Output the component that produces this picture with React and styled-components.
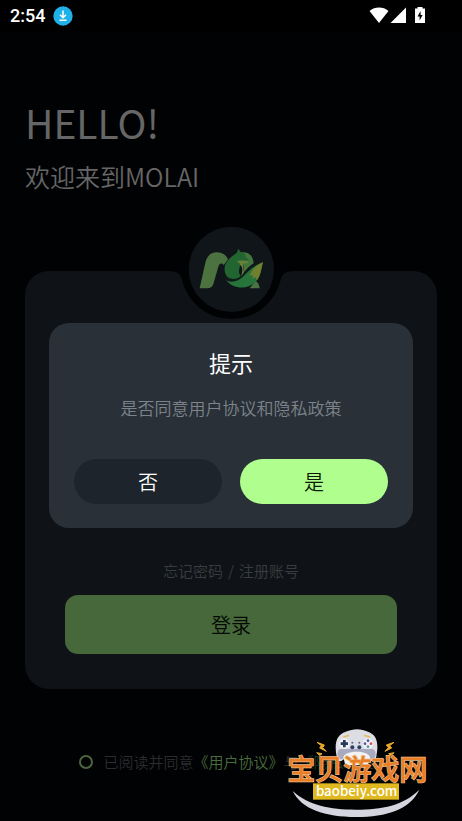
import React from "react"
import styled, { createGlobalStyle } from "styled-components"

const colors = {
  bg: "#010204",
  card: "#0f1317",
  dialog: "#293037",
  lime: "#b0ff8e",
  green: "#46683a",
  heading: "#666666",
}

const GlobalStyle = createGlobalStyle`
  * {
    box-sizing: border-box;
  }
  body {
    margin: 0;
    background: ${colors.bg};
    font-family: "Noto Sans CJK SC", sans-serif;
    font-weight: 350;
  }
  button {
    font-family: inherit;
    font-weight: inherit;
    border: 0;
    padding: 0;
    cursor: pointer;
  }
`

const Screen = styled.div`
  position: relative;
  display: flex;
  flex-direction: column;
  min-height: 100vh;
  overflow: hidden;
`

const StatusBar = styled.header`
  display: flex;
  align-items: center;
  gap: 8px;
  height: 32px;
  padding: 0 35px 0 10px;
  background: #000;
  color: #fff;
`

const Clock = styled.time`
  font: 500 18px/20px Roboto, sans-serif;
`

const StatusIcons = styled.div`
  display: flex;
  align-items: center;
  margin-left: auto;
`

const Main = styled.main`
  display: flex;
  flex-direction: column;
  padding: 62px 25px 48px;
`

const Hello = styled.h1`
  margin: 0;
  font-size: 39px;
  font-weight: 400;
  line-height: 56px;
  color: ${colors.heading};
`

const Welcome = styled.p`
  margin: 10px 0 0;
  font-size: 25px;
  line-height: 32px;
  color: ${colors.heading};
`

const Card = styled.section`
  position: relative;
  display: flex;
  flex-direction: column;
  align-items: center;
  margin-top: 79px;
  padding: 288px 40px 35px;
  border-radius: 24px;
  background: ${colors.card};
`

const Badge = styled.svg`
  position: absolute;
  top: -61px;
`

const CardLinks = styled.nav`
  display: flex;
  gap: 5px;
  font-size: 15px;
  line-height: 24px;
  color: #3a3d40;
`

const PlainLink = styled.a`
  color: ${(props) => props.$color || "inherit"};
  text-decoration: none;
`

const LoginButton = styled.button`
  width: 100%;
  height: 59px;
  margin-top: 12px;
  border-radius: 13px;
  background: ${colors.green};
  color: #040a03;
  font-size: 20px;
`

const Agreement = styled.div`
  display: flex;
  align-items: center;
  justify-content: center;
  gap: 10px;
  margin-top: 61px;
  padding-left: 6px;
  font-size: 15px;
  line-height: 24px;
  color: #2b2c2d;
  white-space: nowrap;
`

const AgreeRadio = styled.input`
  appearance: none;
  width: 14px;
  height: 14px;
  margin: 0;
  border: 2px solid #4a6540;
  border-radius: 50%;
`

const Overlay = styled.div`
  position: absolute;
  inset: 28px 0 0;
  display: flex;
  align-items: center;
  justify-content: center;
  padding: 0 49px;
`

const Dialog = styled.div`
  display: flex;
  flex-direction: column;
  align-items: center;
  width: 100%;
  padding: 23px 25px 24px;
  border-radius: 20px;
  background: ${colors.dialog};
`

const DialogTitle = styled.h2`
  margin: 0;
  font-size: 22px;
  font-weight: 400;
  line-height: 32px;
  color: #fff;
`

const DialogText = styled.p`
  margin: 18px 0 0;
  font-size: 17px;
  line-height: 24px;
  color: #7c838b;
`

const DialogActions = styled.div`
  display: grid;
  grid-template-columns: 1fr 1fr;
  gap: 18px;
  width: 100%;
  margin-top: 39px;
`

const PillButton = styled.button`
  height: 45px;
  border-radius: 23px;
  background: ${(props) => (props.$primary ? colors.lime : "#1d242c")};
  color: ${(props) => (props.$primary ? "#0b1a08" : "#fff")};
  font-size: 20px;
`

const Watermark = styled.svg`
  position: absolute;
  right: 27px;
  bottom: 0;
  pointer-events: none;
`

const DownloadIcon = () => (
  <svg width="20" height="20" viewBox="0 0 20 20" aria-hidden="true">
    <circle cx="10" cy="10" r="9.7" fill="#1fb1ea" />
    <path
      d="M10 4.5v7M7 8.8l3 3 3-3M6.5 14.2h7"
      fill="none"
      stroke="#fff"
      strokeWidth="1.5"
    />
  </svg>
)

const SystemIcons = () => (
  <svg width="58" height="20" viewBox="0 0 58 20" fill="#fff" aria-hidden="true">
    <path d="M0.5 5C5.8 0.4 14.2 0.4 19.5 5L10 17Z" />
    <path d="M37 1.5V17H21.5Z" />
    <path d="M48.5 1h5v1.5H56V17H46V2.5h2.5z" />
    <path d="M51.6 5L48.5 10.6H50.6V14.6L53.6 9H51.6Z" fill="#000" />
  </svg>
)

// fox logo in its round badge, with the notch cut out of the card edge
const LogoBadge = () => (
  <Badge width="125" height="115" viewBox="-4 0 375 345" role="img" aria-label="MOLAI">
    <path
      d="M0 170V184C20 184 30 192 35 210A152 152 0 0 0 331 210C336 192 346 184 366 184V170Z"
      fill={colors.bg}
    />
    <circle cx="183" cy="178" r="128" fill="#10151a" />
    <path
      d="M88 235L105 158C110 137 122 127 139 127C155 127 168 135 173 148L160 166C157 158 147 159 144 170L129 222C126 231 120 235 111 235Z"
      fill="#4c7240"
    />
    <path d="M214 127C234 124 248 136 250 160C240 166 230 176 222 186L218 160Z" fill="#45753d" />
    <path d="M255 213C263 216 267 225 268 235H238Z" fill="#4c7343" />
    <path
      d="M199 129L204 116L211 126L223 130L227 141L236 151C233 158 226 160 220 159C213 166 216 180 218 194C206 207 186 211 172 202C162 192 160 174 166 161C173 147 186 138 199 129Z"
      fill="#236531"
    />
    <path
      d="M198 154C208 150 224 152 235 153C232 160 226 161 220 160C216 166 221 178 221 187L214 197C216 184 216 173 210 166C210 160 204 156 198 154Z"
      fill="#66803a"
    />
    <path d="M210 166C218 172 218 186 211 198C203 190 206 176 210 166Z" fill="#10151a" />
    <path
      d="M167 210C182 220 202 214 216 202C234 184 248 167 278 157C272 176 273 193 260 211C238 239 191 241 167 210Z"
      fill="#27743a"
    />
    <path
      d="M278 157C272 176 273 193 260 211L255 201L247 206L247 194L237 198L245 183C252 171 262 164 278 157Z"
      fill="#70802f"
    />
    <path
      d="M162 203C182 218 202 209 214 198C230 182 243 168 264 160"
      fill="none"
      stroke="#10201a"
      strokeWidth="3"
    />
  </Badge>
)

const SiteMark = () => (
  <Watermark width="155" height="101" viewBox="0 0 465 303">
    <path
      d="M38 210C85 253 150 266 228 266C306 266 371 253 418 206C391 264 321 288 228 288C135 288 64 264 38 210Z"
      fill="#d5d5e0"
    />
    <path
      d="M171 111C161 65 170 41 197 32C220 22 243 22 264 32C290 41 298 65 288 111C280 130 267 118 260 105C248 88 210 88 198 105C191 118 178 130 171 111Z"
      fill="#dddde4"
    />
    <path
      d="M173 105C170 79 184 83 205 84H253C276 82 290 82 286 106C280 121 267 112 258 101C246 89 212 89 201 101C191 115 177 121 173 105Z"
      fill="#a8aac0"
    />
    <path d="M190 108C196 87 263 87 270 108L264 133H196Z" fill="#f3f3f5" />
    <path d="M190 48L207 43M252 43L270 48" stroke="#e2b94a" strokeWidth="4" />
    <circle cx="193" cy="68" r="16" fill="#f0f0f5" />
    <path d="M193 57V79M182 68H204" stroke="#26385b" strokeWidth="8" />
    <circle cx="264" cy="68" r="16" fill="#f0f0f5" />
    <circle cx="264" cy="59" r="4" fill="#465b9c" />
    <circle cx="264" cy="77" r="4" fill="#4c9aac" />
    <circle cx="255" cy="68" r="4" fill="#5b558e" />
    <circle cx="273" cy="68" r="4" fill="#d64760" />
    <circle cx="217" cy="79" r="6" fill="#2c4263" />
    <circle cx="238" cy="79" r="6" fill="#2c4263" />
    <circle cx="217" cy="65" r="3" fill="#5a678d" />
    <circle cx="238" cy="65" r="3" fill="#5a678d" />
    <path
      d="M111 64L133 72L128 80L139 91L119 81L124 74ZM342 64L319 72L325 80L315 91L335 81L329 74ZM110 95L126 98L119 104ZM342 95L326 98L333 104Z"
      fill="#eaa925"
      stroke="#eaa925"
      strokeWidth="3"
    />
    <rect x="99" y="187" width="258" height="49" fill="#dfb91f" />
    <text
      x="22"
      y="178"
      fontSize="84"
      fontWeight="500"
      fill="#e87f28"
      stroke="#f0bd86"
      strokeWidth="4"
      paintOrder="stroke"
    >
      宝贝游戏网
    </text>
    <text
      x="230"
      y="225"
      textAnchor="middle"
      fontSize="40"
      fontWeight="500"
      fill="#fff"
    >
      baobeiy.com
    </text>
  </Watermark>
)

const App = () => (
  <Screen>
    <GlobalStyle />
    <StatusBar>
      <Clock>2:54</Clock>
      <DownloadIcon />
      <StatusIcons>
        <SystemIcons />
      </StatusIcons>
    </StatusBar>
    <Main>
      <Hello>HELLO!</Hello>
      <Welcome>欢迎来到MOLAI</Welcome>
      <Card>
        <LogoBadge />
        <CardLinks>
          <PlainLink href="#forgot">忘记密码</PlainLink>
          <span>/</span>
          <PlainLink href="#register">注册账号</PlainLink>
        </CardLinks>
        <LoginButton type="button">登录</LoginButton>
      </Card>
      <Agreement>
        <AgreeRadio type="radio" id="agree" />
        <label htmlFor="agree">
          已阅读并同意
          <PlainLink href="#terms" $color="#4a6d3e">《用户协议》</PlainLink>
          与
          <PlainLink href="#privacy" $color="#263b22">《隐私政策》</PlainLink>
        </label>
      </Agreement>
    </Main>
    <Overlay>
      <Dialog role="dialog" aria-labelledby="dialog-title">
        <DialogTitle id="dialog-title">提示</DialogTitle>
        <DialogText>是否同意用户协议和隐私政策</DialogText>
        <DialogActions>
          <PillButton type="button">否</PillButton>
          <PillButton type="button" $primary>是</PillButton>
        </DialogActions>
      </Dialog>
    </Overlay>
    <SiteMark />
  </Screen>
)

export default App
